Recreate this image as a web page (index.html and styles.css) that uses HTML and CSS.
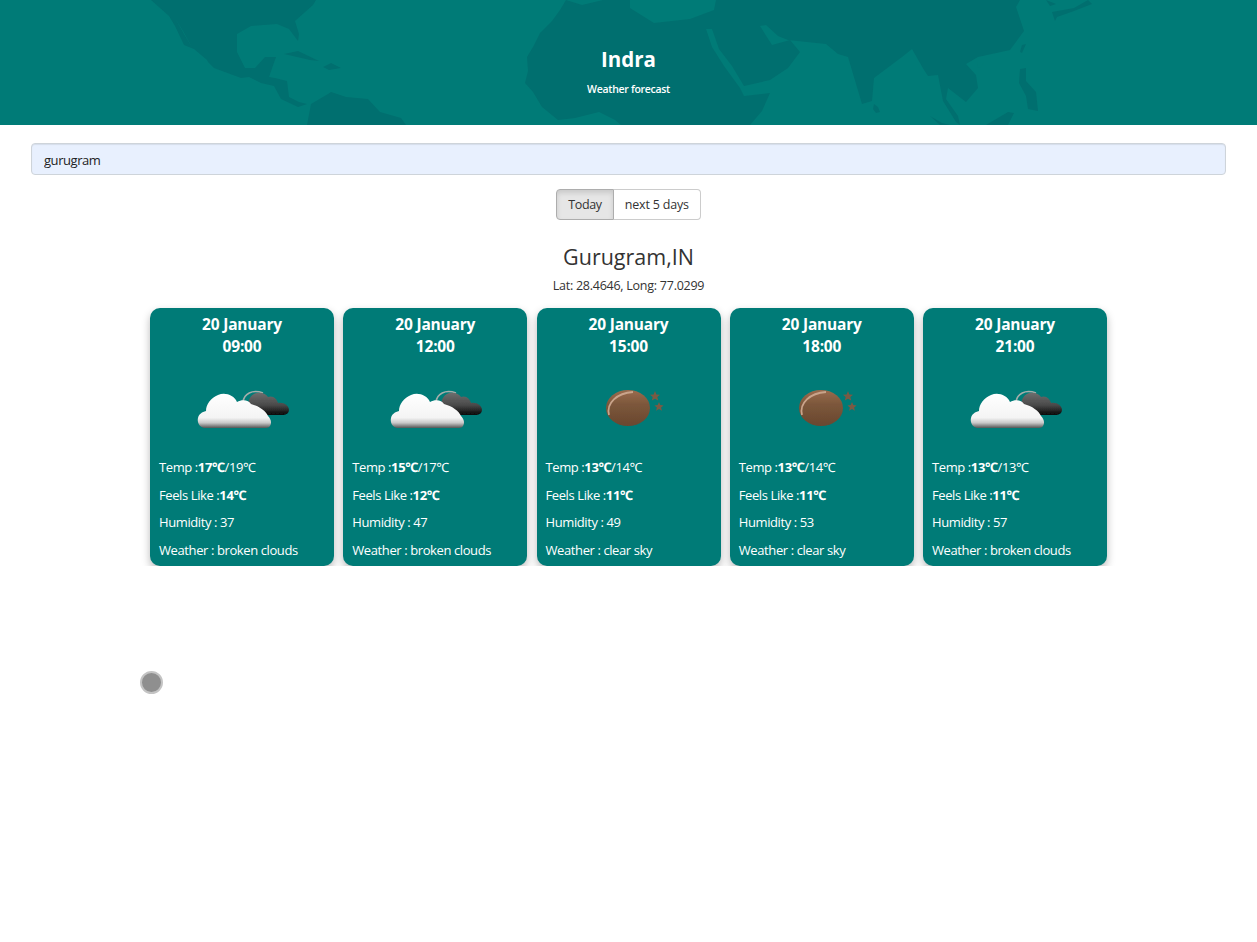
FILE: index.html
```html
<!DOCTYPE html>
<html lang="en">
<head>
  <meta charset="UTF-8"/>
  <title>Indra</title>
  <link rel="stylesheet" href="styles.css">
</head>
<body>
<svg class="defs" width="0" height="0">
  <defs>
    <linearGradient id="cloudWhite" x1="0" y1="0" x2="0" y2="1">
      <stop offset="0" stop-color="#ffffff"/>
      <stop offset="0.7" stop-color="#f4f4f4"/>
      <stop offset="0.85" stop-color="#c8c8c8"/>
      <stop offset="1" stop-color="#555555"/>
    </linearGradient>
    <linearGradient id="cloudDark" x1="0" y1="0" x2="0" y2="1">
      <stop offset="0" stop-color="#6e6e6e"/>
      <stop offset="0.55" stop-color="#4a4a4a"/>
      <stop offset="1" stop-color="#080808"/>
    </linearGradient>
    <linearGradient id="moonBrown" x1="0" y1="0" x2="0" y2="1">
      <stop offset="0" stop-color="#9a6c4e"/>
      <stop offset="0.4" stop-color="#7c573b"/>
      <stop offset="1" stop-color="#69472f"/>
    </linearGradient>
    <filter id="soft"><feGaussianBlur stdDeviation="0.5"/></filter>
    <symbol id="clouds" viewBox="0 0 100 50">
      <path fill="none" stroke="#a5aeab" stroke-width="1.6" filter="url(#soft)" d="M51 17 C52 9 60 4 71 8"/>
      <path fill="url(#cloudDark)" filter="url(#soft)" d="M58 30 C54 22 56 9 65 8 C70 7 74 9 76 12 C81 10 85 14 86 18 C92 17 97 21 97 25 C97 28 94 30 90 30 Z"/>
      <path fill="url(#cloudWhite)" filter="url(#soft)" d="M12 43 C7 42 5 37 6 33 C7 29 10 27 14 26 C14 19 19 13 26 10 C33 7 42 10 45 17 C50 14 57 15 59 19 C67 21 74 26 76 31 C79 34 80 38 78 41 C77 43 74 43 72 43 Z"/>
    </symbol>
    <symbol id="moon" viewBox="0 0 100 50">
      <ellipse cx="49" cy="23" rx="22" ry="18" fill="url(#moonBrown)" filter="url(#soft)"/>
      <path fill="none" stroke="#c9a48b" stroke-width="1.8" d="M30 30 C27 18 38 8 54 7"/>
      <path fill="#7a5a44" d="M76 6 l1.4 3.4 3.6 .3 -2.7 2.4 .9 3.5 -3.2 -1.9 -3.2 1.9 .9 -3.5 -2.7 -2.4 3.6 -.3 z"/>
      <path fill="#7a5a44" d="M80 17 l1.3 3.1 3.3 .3 -2.5 2.2 .8 3.2 -2.9 -1.7 -2.9 1.7 .8 -3.2 -2.5 -2.2 3.3 -.3 z"/>
    </symbol>
  </defs>
</svg>

<header class="banner">
  <svg class="map" viewBox="0 0 1257 125" preserveAspectRatio="none">
    <!-- americas -->
    <path d="M151 0 L160 8 L169 16 L175 26 L184 45 L194 49 L207 60 L208 62 L214 68 L241 78 L249 77 L261 83 L274 86 L281 99 L298 107 L307 104 L299 102 L289 97 L287 81 L275 78 L269 77 L276 57 L265 57 L255 68 L245 68 L237 52 L237 34 L251 26 L277 24 L289 29 L298 41 L299 34 L295 21 L313 5 L316 0 Z"/>
    <path d="M307 125 L311 104 L328 94 L331 92 L346 97 L368 99 L380 112 L401 118 L406 125 Z"/>
    <path d="M284 54 L298 51 L319 61 L310 60 Z"/>
    <path d="M323 67 L331 63 L341 68 L329 70 Z"/>
    <!-- africa + eurasia -->
    <path d="M566 0 L560 10 L552 21 L540 33 L533 47 L527 57 L528 71 L525 83 L533 92 L542 107 L558 120 L575 118 L599 112 L615 120 L621 125 L750 125 L762 111 L770 93 L744 96 L744 86 L770 80 L788 68 L800 52 L790 40 L772 45 L760 26 L766 25 L778 36 L788 40 L826 44 L838 54 L848 57 L862 104 L872 101 L874 78 L902 57 L912 49 L924 70 L928 76 L938 75 L943 101 L956 122 L960 125 L958 116 L946 99 L948 88 L966 102 L978 88 L976 75 L966 64 L978 57 L1010 50 L1024 31 L1016 7 L1020 0 Z"/>
    <!-- islands -->
    <path d="M874 104 L878 107 L880 112 L876 113 L873 109 Z"/>
    <path d="M930 116 L942 123 L950 125 L940 125 Z"/>
    <path d="M1008 112 L1014 113 L1008 125 L986 125 Z"/>
    <path d="M1022 45 L1026 44 L1022 53 L1020 52 Z"/>
    <path d="M1020 69 L1026 68 L1026 81 L1036 92 L1038 111 L1028 109 L1026 96 L1019 83 Z"/>
    <path d="M1046 0 L1056 4 L1050 6 Z"/>
    <path d="M1052 12 L1074 8 L1088 0 L1092 4 L1074 11 L1057 17 L1055 21 Z"/>
    <!-- seas -->
    <path class="sea" d="M175 18 L183 31 L193 49 L184 34 Z"/>
    <path class="sea" d="M566 0 L582 5 L603 0 Z"/>
    <path class="sea" d="M630 0 L630 8 L654 23 L690 19 L714 10 L716 0 Z"/>
    <path class="sea" d="M706 29 L712 29 L719 49 L732 66 L744 86 L744 96 L740 88 L724 66 L712 47 Z"/>
    <path class="sea" d="M978 62 L984 62 L980 68 L977 67 Z"/>
  </svg>
  <h1 class="brand">Indra</h1>
  <p class="tagline">Weather forecast</p>
</header>

<main class="page">
  <div class="search-row">
    <input class="search" type="text" value="gurugram"/>
  </div>

  <div class="toggle">
    <button class="toggle-btn active" type="button">Today</button>
    <button class="toggle-btn" type="button">next 5 days</button>
  </div>

  <h2 class="city">Gurugram,IN</h2>
  <p class="coords">Lat: 28.4646, Long: 77.0299</p>

  <section class="cards">
    <article class="card">
      <h3 class="when">20 January<br/>09:00</h3>
      <svg class="icon"><use href="#clouds"/></svg>
      <p class="line">Temp :<b>17℃</b>/19℃</p>
      <p class="line">Feels Like :<b>14℃</b></p>
      <p class="line">Humidity : 37</p>
      <p class="line">Weather : broken clouds</p>
      <p class="line">Wind : 1.05 km/h, 360°</p>
    </article>
    <article class="card">
      <h3 class="when">20 January<br/>12:00</h3>
      <svg class="icon"><use href="#clouds"/></svg>
      <p class="line">Temp :<b>15℃</b>/17℃</p>
      <p class="line">Feels Like :<b>12℃</b></p>
      <p class="line">Humidity : 47</p>
      <p class="line">Weather : broken clouds</p>
      <p class="line">Wind : 1.05 km/h, 360°</p>
    </article>
    <article class="card">
      <h3 class="when">20 January<br/>15:00</h3>
      <svg class="icon"><use href="#moon"/></svg>
      <p class="line">Temp :<b>13℃</b>/14℃</p>
      <p class="line">Feels Like :<b>11℃</b></p>
      <p class="line">Humidity : 49</p>
      <p class="line">Weather : clear sky</p>
      <p class="line">Wind : 1.05 km/h, 360°</p>
    </article>
    <article class="card">
      <h3 class="when">20 January<br/>18:00</h3>
      <svg class="icon"><use href="#moon"/></svg>
      <p class="line">Temp :<b>13℃</b>/14℃</p>
      <p class="line">Feels Like :<b>11℃</b></p>
      <p class="line">Humidity : 53</p>
      <p class="line">Weather : clear sky</p>
      <p class="line">Wind : 1.05 km/h, 360°</p>
    </article>
    <article class="card">
      <h3 class="when">20 January<br/>21:00</h3>
      <svg class="icon"><use href="#clouds"/></svg>
      <p class="line">Temp :<b>13℃</b>/13℃</p>
      <p class="line">Feels Like :<b>11℃</b></p>
      <p class="line">Humidity : 57</p>
      <p class="line">Weather : broken clouds</p>
      <p class="line">Wind : 1.05 km/h, 360°</p>
    </article>
  </section>
</main>

<div class="pointer"></div>
</body>
</html>
```

FILE: styles.css
```css
* { box-sizing: border-box; }

html, body { margin: 0; padding: 0; }

body { font: 13px/20px "Open Sans", "Noto Sans", sans-serif; letter-spacing: -0.4px; color: #333; background: #fff; }

.defs { display: block; height: 0; }

/* ===== banner ===== */
.banner { position: relative; height: 125px; overflow: hidden; background: #007b77; color: #fff; text-align: center; padding-top: 44px; }
.map { position: absolute; left: 0; top: 0; width: 100%; height: 100%; fill: #006f6f; }
.map .sea { fill: #007b77; }
.brand { position: relative; margin: 0; font-size: 20.5px; line-height: 30px; font-weight: 700; letter-spacing: 0; }
.tagline { position: relative; margin: 6px 0 0; font-size: 10.5px; line-height: 18px; font-weight: 600; letter-spacing: -0.3px; }

/* ===== search + toggle ===== */
.search-row { padding: 18px 31px 0; }
.search { display: block; width: 100%; height: 32px; padding: 2px 12px 0; border: 1px solid #ced4da; border-radius: 4px; background: #e8f0fe; color: #222; font: 13px "Open Sans", "Noto Sans", sans-serif; letter-spacing: -0.45px; box-shadow: inset 0 1px 1px rgba(0,0,0,.08); }

.toggle { display: flex; justify-content: center; margin-top: 14px; }
.toggle-btn { height: 31px; padding: 0 11px; border: 1px solid #ccc; background: #fff; color: #333; font: 12.5px "Open Sans", "Noto Sans", sans-serif; letter-spacing: -0.2px; }
.toggle-btn:first-child { border-radius: 4px 0 0 4px; }
.toggle-btn:last-child { border-left: 0; border-radius: 0 4px 4px 0; }
.toggle-btn.active { background: #e6e6e6; border-color: #adadad; letter-spacing: -0.35px; box-shadow: inset 0 3px 5px rgba(0,0,0,.125); }

.city { margin: 21px 0 0; font-size: 21.5px; line-height: 32px; font-weight: 500; text-align: center; letter-spacing: 0; }
.coords { margin: 4px 0 0; font-size: 12.5px; line-height: 18px; text-align: center; letter-spacing: -0.25px; }

/* ===== cards ===== */
.cards { display: flex; justify-content: center; gap: 9.25px; margin-top: 13px; }
.card { width: 184px; height: 258px; padding: 5px 9px 0; border-radius: 10px; background: #007b77; color: #fff; box-shadow: 0 4px 8px rgba(0,0,0,.28); }
.when { margin: 0; font-size: 15.5px; line-height: 22px; font-weight: 700; text-align: center; letter-spacing: -0.2px; }
.icon { display: block; width: 100px; height: 50px; margin: 28px auto 22px; }
.line { margin: 0 0 7.6px; font-size: 13px; line-height: 20px; white-space: nowrap; }
.line b { font-weight: 700; }

/* floating dot */
.pointer { position: absolute; left: 140px; top: 671px; width: 23px; height: 23px; border-radius: 50%; background: #8f8f8f; border: 2px solid #c4c4c4; }
```
